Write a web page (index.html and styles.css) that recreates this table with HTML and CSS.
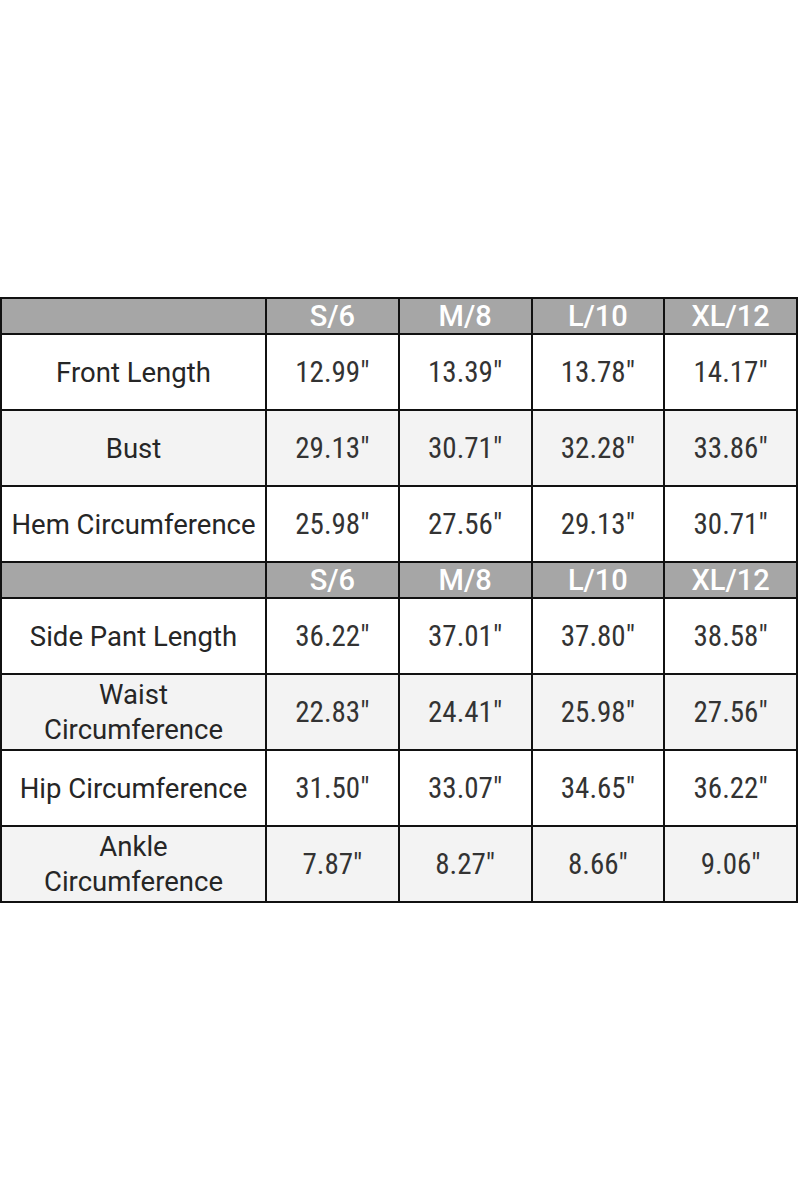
FILE: index.html
```html
<!DOCTYPE html>
<html>
<head>
<meta charset="utf-8">
<link rel="stylesheet" href="styles.css">
</head>
<body>
<div class="page">
<table class="chart">
  <colgroup>
    <col class="c-label"><col class="c-size"><col class="c-size"><col class="c-size"><col class="c-size">
  </colgroup>
  <tr class="head"><td></td><td>S/6</td><td>M/8</td><td>L/10</td><td>XL/12</td></tr>
  <tr class="row"><td class="lbl">Front Length</td><td>12.99"</td><td>13.39"</td><td>13.78"</td><td>14.17"</td></tr>
  <tr class="row alt"><td class="lbl">Bust</td><td>29.13"</td><td>30.71"</td><td>32.28"</td><td>33.86"</td></tr>
  <tr class="row"><td class="lbl">Hem Circumference</td><td>25.98"</td><td>27.56"</td><td>29.13"</td><td>30.71"</td></tr>
  <tr class="head"><td></td><td>S/6</td><td>M/8</td><td>L/10</td><td>XL/12</td></tr>
  <tr class="row"><td class="lbl">Side Pant Length</td><td>36.22"</td><td>37.01"</td><td>37.80"</td><td>38.58"</td></tr>
  <tr class="row alt"><td class="lbl">Waist<br>Circumference</td><td>22.83"</td><td>24.41"</td><td>25.98"</td><td>27.56"</td></tr>
  <tr class="row"><td class="lbl">Hip Circumference</td><td>31.50"</td><td>33.07"</td><td>34.65"</td><td>36.22"</td></tr>
  <tr class="row alt"><td class="lbl">Ankle<br>Circumference</td><td>7.87"</td><td>8.27"</td><td>8.66"</td><td>9.06"</td></tr>
</table>
</div>
</body>
</html>
```
FILE: styles.css
```css
html, body {
  margin: 0;
  padding: 0;
  background: #ffffff;
}
.page {
  width: 800px;
  height: 1200px;
  padding-top: 297px;
  box-sizing: border-box;
}
.chart {
  width: 798px;
  border-collapse: collapse;
  table-layout: fixed;
  color: #262626;
}
.c-label { width: 265px; }
.chart td {
  border: 2px solid #111111;
  text-align: center;
  vertical-align: middle;
  padding: 0;
}
.head td {
  background: #a6a6a6;
  color: #ffffff;
  height: 34px;
  font-family: "Roboto", "Liberation Sans", sans-serif;
  font-size: 29px;
  font-weight: 500;
  line-height: 30px;
}
.row td {
  background: #ffffff;
  height: 74px;
  font-family: "Liberation Sans Narrow", "Roboto Condensed", "DejaVu Sans Condensed", sans-serif;
  font-size: 29px;
  line-height: 35px;
  color: #333333;
}
.row td.lbl {
  font-family: "Roboto", "Liberation Sans", sans-serif;
  font-size: 27.5px;
  color: #262626;
}
.row.alt td {
  background: #f3f3f3;
}
```
